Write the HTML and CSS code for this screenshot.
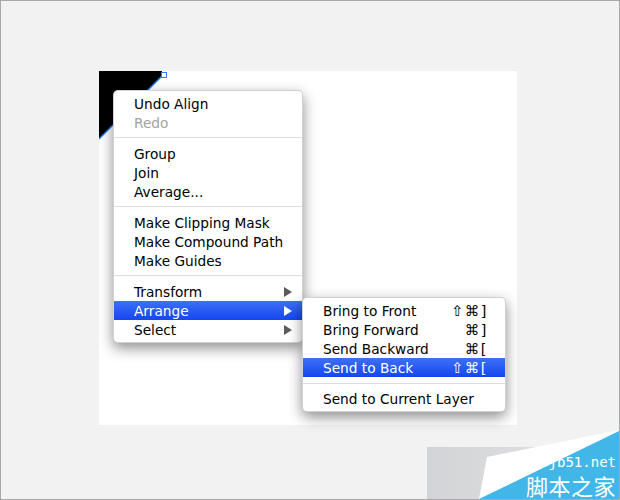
FILE: index.html
```html
<!DOCTYPE html>
<html>
<head>
<meta charset="utf-8">
<link rel="stylesheet" href="styles.css">
</head>
<body>
<div class="frame">
  <div class="canvas">
    <svg class="shape" width="80" height="80" viewBox="0 0 80 80">
      <polygon points="0,0 63,0 63,5 0,68" fill="#000"/>
      <line x1="63" y1="5" x2="0" y2="68" stroke="#2b7ff3" stroke-width="1.4"/>
      <rect x="62.5" y="1.5" width="5" height="5" fill="#fff" stroke="#2b7ff3" stroke-width="1"/>
    </svg>
    <div class="menu main">
      <div class="item">Undo Align</div>
      <div class="item disabled">Redo</div>
      <div class="sep"></div>
      <div class="item">Group</div>
      <div class="item">Join</div>
      <div class="item">Average...</div>
      <div class="sep"></div>
      <div class="item">Make Clipping Mask</div>
      <div class="item">Make Compound Path</div>
      <div class="item">Make Guides</div>
      <div class="sep"></div>
      <div class="item sub">Transform<span class="arrow"></span></div>
      <div class="item sub active">Arrange<span class="arrow"></span>
        <div class="menu submenu">
          <div class="item">Bring to Front<span class="key">⇧⌘]</span></div>
          <div class="item">Bring Forward<span class="key">⌘]</span></div>
          <div class="item">Send Backward<span class="key">⌘[</span></div>
          <div class="item active">Send to Back<span class="key">⇧⌘[</span></div>
          <div class="sep"></div>
          <div class="item">Send to Current Layer</div>
        </div>
      </div>
      <div class="item sub">Select<span class="arrow"></span></div>
    </div>
  </div>
  <div class="watermark">
    <svg class="wm-shape" width="192" height="69" viewBox="0 0 192 69">
      <polygon points="60,27 192,0 192,69 52,69" fill="#fff"/>
      <polygon points="192,1 192,69 52,69" fill="#43b6e8"/>
    </svg>
    <div class="wm-text">
      <span class="wm-en">jb51.net</span>
      <span class="wm-cn">脚本之家</span>
    </div>
  </div>
</div>
</body>
</html>
```

FILE: styles.css
```css
html, body {
  margin: 0;
  padding: 0;
}
body {
  width: 620px;
  height: 500px;
  overflow: hidden;
}
.frame {
  position: relative;
  box-sizing: border-box;
  width: 620px;
  height: 500px;
  border: 1px solid #a9a9a9;
  background: #f2f2f2;
  padding: 70px 0 0 98px;
  overflow: hidden;
}
.canvas {
  position: relative;
  width: 418px;
  height: 354px;
  background: #fff;
}
.shape {
  position: absolute;
  left: 0;
  top: 0;
}
.menu {
  position: absolute;
  box-sizing: border-box;
  background: #fff;
  border: 1px solid rgba(0, 0, 0, 0.18);
  border-radius: 5px;
  padding: 3px 0;
  font-family: "DejaVu Sans", Verdana, sans-serif;
  font-size: 13.7px;
  color: #000;
  box-shadow: 0 5px 14px rgba(0, 0, 0, 0.45);
}
.main {
  left: 14px;
  top: 19px;
  width: 190px;
}
.submenu {
  left: 188px;
  top: -4px;
  width: 204px;
}
.item {
  position: relative;
  box-sizing: border-box;
  display: flex;
  align-items: center;
  justify-content: space-between;
  height: 19px;
  padding: 1px 18px 0 20px;
  line-height: 18px;
  white-space: nowrap;
}
.item.disabled {
  color: #a3a3a3;
}
.item.active {
  background: linear-gradient(#3d70f6, #1546ef);
  color: #fff;
}
.submenu .item {
  color: #000;
}
.submenu .item.active {
  color: #fff;
}
.sep {
  height: 1px;
  background: #dedede;
  margin: 5px 0 6px;
}
.submenu .sep {
  margin: 6px 0 5px;
}
.arrow {
  width: 0;
  height: 0;
  border-top: 5px solid transparent;
  border-bottom: 5px solid transparent;
  border-left: 8px solid #5b5b5b;
  margin-right: -8px;
}
.active > .arrow {
  border-left-color: #fff;
}
.key {
  font-size: 14.5px;
  letter-spacing: 1.5px;
  margin-right: -1px;
}
.watermark {
  position: absolute;
  right: 0;
  bottom: 0;
  width: 192px;
  height: 52px;
  background: linear-gradient(90deg, #d3d4d7, #e4e4e5);
}
.wm-shape {
  position: absolute;
  right: 0;
  bottom: 0;
}
.wm-text {
  position: absolute;
  right: 3px;
  bottom: 0;
  display: flex;
  flex-direction: column;
  align-items: flex-end;
  gap: 1px;
  color: #fff;
}
.wm-en {
  font-family: "DejaVu Sans Mono", monospace;
  font-size: 14px;
  line-height: 15px;
}
.wm-cn {
  font-family: "Noto Sans CJK SC", sans-serif;
  font-size: 22px;
  line-height: 28px;
  letter-spacing: 0.5px;
}
```
